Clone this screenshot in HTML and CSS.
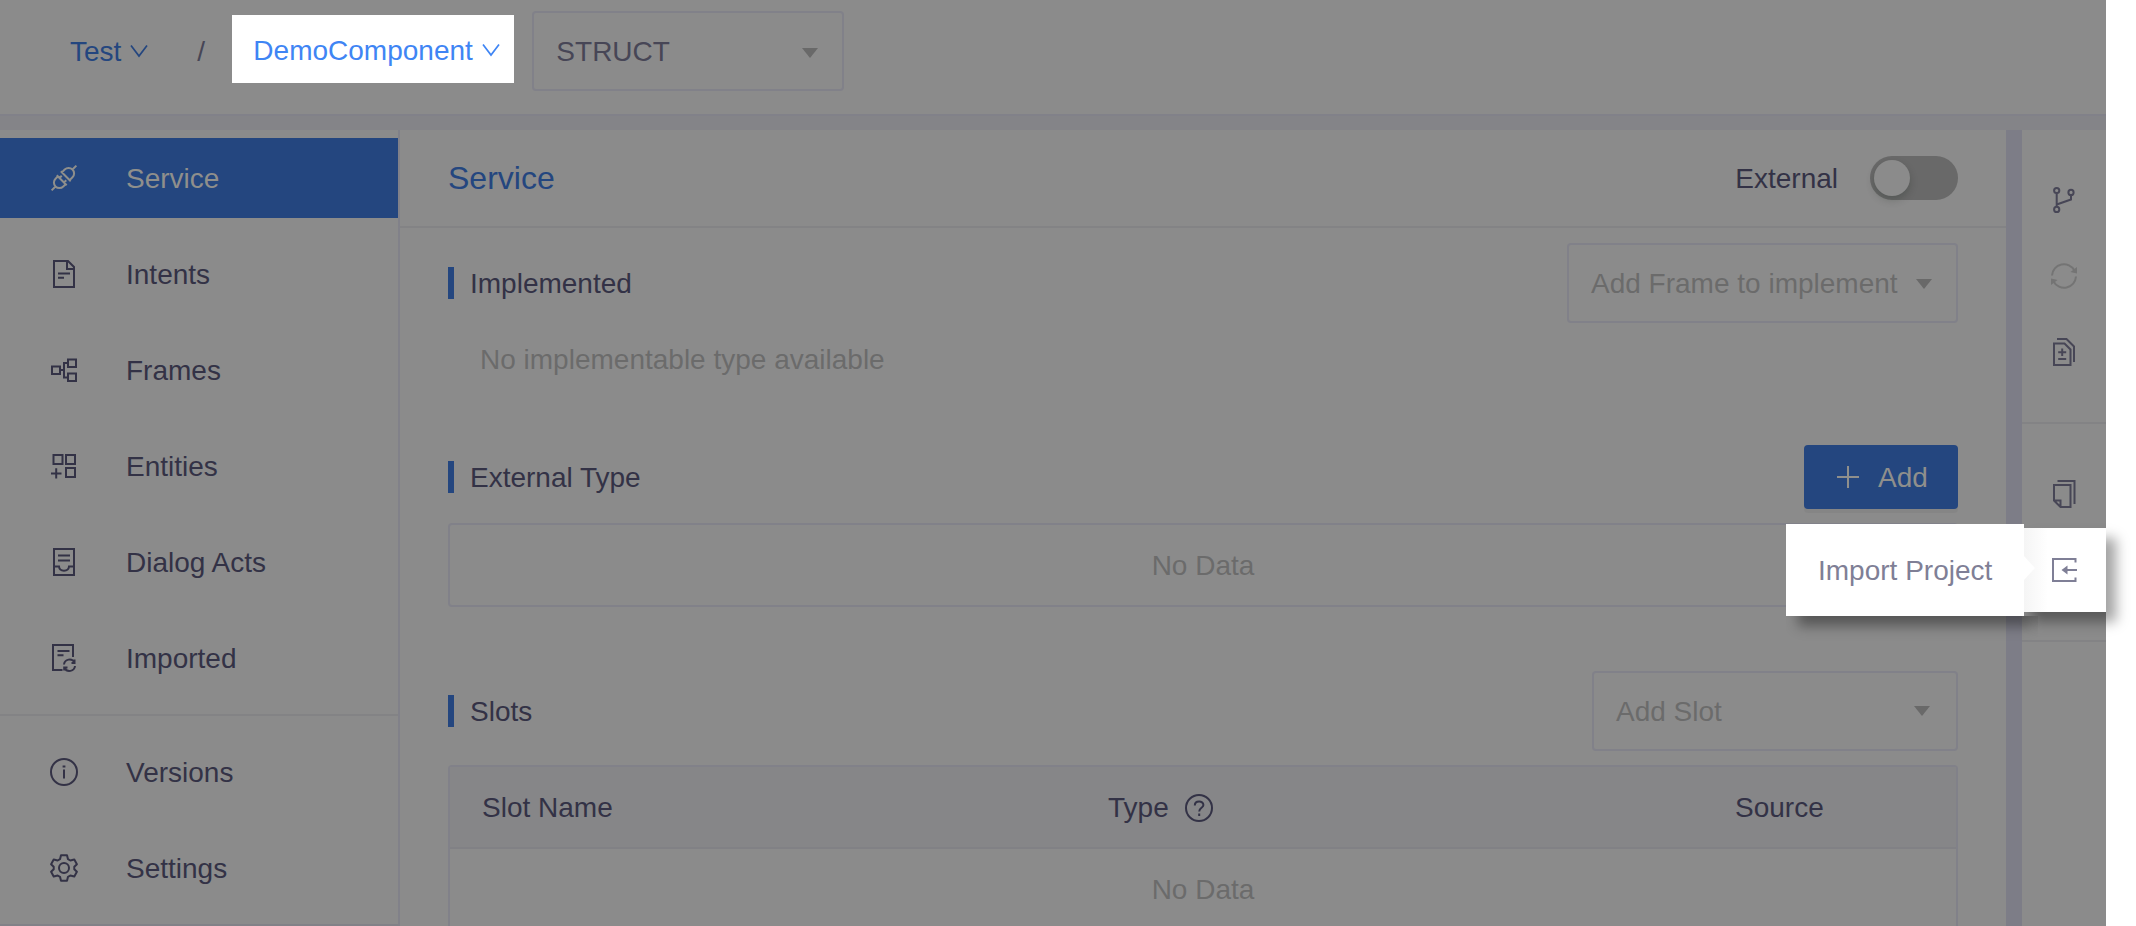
FILE: index.html
```html
<!DOCTYPE html>
<html lang="en">
<head>
<meta charset="utf-8">
<title>DemoComponent</title>
<link rel="stylesheet" href="styles.css">
</head>
<body>
<div class="app">
  <header class="topbar">
    <a class="crumb">Test<svg class="chevron" width="18" height="14" viewBox="0 0 18 14"><path d="M1 1.500 9 12 17 1.500"/></svg></a>
    <span class="slash">/</span>
    <a class="crumb crumb-active">DemoComponent<svg class="chevron" width="18" height="14" viewBox="0 0 18 14"><path d="M1 1.500 9 12 17 1.500"/></svg></a>
    <div class="select select-struct"><span>STRUCT</span><i class="caret"></i></div>
  </header>
  <div class="band"></div>
  <div class="body">
    <nav class="sidebar">
      <a class="item item-on"><svg class="icon" viewBox="0 0 32 32"><g transform="rotate(45 16 16)"><path d="M16 -1.500V4M10.500 13.500V9.500a5.500 5.500 0 0 1 11 0v4M9 13.500H23M9 19.200H23M12.800 19.200V16M19.200 19.200V16M10.500 19.200V22.500a5.500 5.500 0 0 0 11 0V19.200M16 28V33.500"/></g></svg>Service</a>
      <a class="item"><svg class="icon" viewBox="0 0 32 32"><path d="M6 3H20L26 9V29H6ZM19 3V11H26M10 15.500H22M10 19.700H16"/></svg>Intents</a>
      <a class="item"><svg class="icon" viewBox="0 0 32 32"><path d="M4 12.500H12V20H4ZM20 5.500H28V13H20ZM20 19.500H28V27H20ZM12 16H16M20 9H16V23.500H20"/></svg>Frames</a>
      <a class="item"><svg class="icon" viewBox="0 0 32 32"><path d="M5.500 5H14.500V14H5.500ZM18 5H27V14H18ZM18 18H27V27H18ZM3 23.500H13.500M8.200 18.300V28.500"/></svg>Entities</a>
      <a class="item"><svg class="icon" viewBox="0 0 32 32"><path d="M6 3H26V29H6ZM10 9.500H22M10 14.500H22M6 20.500H11C11.500 26 20.500 26 21 20.500H26"/></svg>Dialog Acts</a>
      <a class="item"><svg class="icon" viewBox="0 0 32 32"><path d="M14.500 28H5V3H25V15M9.500 9H21.500M9.500 13.300H15.500M16 22.500A5.600 5.600 0 0 1 26.500 20.500M27 24A5.600 5.600 0 0 1 16.500 26M26.500 17.500V21H23.500M16.200 28.500V25.500H19.500"/></svg>Imported</a>
      <div class="rule"></div>
      <a class="item"><svg class="icon" viewBox="0 0 32 32"><circle cx="16" cy="16" r="13"/><path d="M16 13.500V22.500M14.600 10.500H17.400"/></svg>Versions</a>
      <a class="item"><svg class="icon" viewBox="0 0 32 32"><circle cx="16" cy="16" r="5"/><path d="M13 3.200H19L20 7.200L22.300 8.500L26.300 7.500L28.900 12.200L26.300 14.800V17.200L28.900 19.800L26.300 24.500L22.300 23.500L20 24.800L19 28.800H13L12 24.800L9.700 23.500L5.700 24.500L3.100 19.800L5.700 17.200V14.800L3.100 12.200L5.700 7.500L9.700 8.500L12 7.200Z" stroke-linejoin="round"/></svg>Settings</a>
    </nav>
    <main class="main">
      <div class="title-row"><h1>Service</h1><div class="external"><span class="label">External</span><span class="switch"></span></div></div>
      <div class="content">
        <section class="section">
          <div class="head"><h2>Implemented</h2><div class="select select-frame muted"><span>Add Frame to implement</span><i class="caret"></i></div></div>
          <p class="note">No implementable type available</p>
        </section>
        <section class="section">
          <div class="head"><h2>External Type</h2><button class="add"><svg width="24" height="24" viewBox="0 0 24 24"><path d="M12 1V23M1 12H23"/></svg><span class="label">Add</span></button></div>
          <div class="table"><div class="empty">No Data</div></div>
        </section>
        <section class="section">
          <div class="head"><h2>Slots</h2><div class="select select-slot muted"><span>Add Slot</span><i class="caret"></i></div></div>
          <div class="table">
            <div class="thead"><span>Slot Name</span><span class="type">Type<svg width="28" height="28" viewBox="0 0 28 28"><circle cx="14" cy="14" r="13"/><path d="M9.800 11.500C9.800 6.300 18.400 6.300 18.400 11.100C18.400 14 14.200 13.700 14.200 17.500M14.200 19.600V22"/></svg></span><span>Source</span></div>
            <div class="empty">No Data</div>
          </div>
        </section>
      </div>
    </main>
    <div class="gutter"></div>
    <aside class="rail">
      <div class="tools tools-top">
        <div class="tool"><svg class="icon" viewBox="0 0 32 32"><circle cx="8.700" cy="6.500" r="2.600"/><circle cx="23" cy="8.400" r="2.600"/><circle cx="8.700" cy="25.400" r="2.600"/><path d="M8.700 9V23M23 11V15.500L8.700 20.500"/></svg></div>
        <div class="tool off"><svg class="icon" viewBox="0 0 32 32"><path d="M4 15.500A12 12 0 0 1 26.500 10.500M28 16.500A12 12 0 0 1 5.500 21.500"/><path class="solid" d="M29 7V13.500L22.500 12ZM3 25V18.500L9.500 20Z"/></svg></div>
        <div class="tool"><svg class="icon" viewBox="0 0 32 32"><path d="M6 7.500H16.500L22.500 13.500V29H6ZM9 3H18.500L26 10.500V26M14.200 12.500V20M10.200 16.300H18.200M10.200 23H18.200"/></svg></div>
      </div>
      <div class="tools tools-mid">
        <div class="tool tool-tall"><svg class="icon" viewBox="0 0 32 32"><path d="M6 7H22.500V29H12.500L6 22.500ZM9.500 3H26.500V26M6 22.500H12.500V29"/></svg></div>
        <div class="tool tool-lit"><svg class="icon" viewBox="0 0 32 32"><path d="M27.500 8.500V5H5V27H27.500V23.500M17 16H29"/><path class="solid" d="M19.500 11.500V20.500L13.500 16Z"/></svg>
          <div class="tip">Import Project</div>
        </div>
      </div>
    </aside>
  </div>
</div>
</body>
</html>
```

FILE: styles.css
```css
* { box-sizing: border-box; }
body { margin: 0; background: #fff; font: 28px/40px "Liberation Sans", Arial, sans-serif; color: #333246; overflow: hidden; }
svg { fill: none; stroke: currentColor; stroke-width: 2; flex: none; display: block; }
h1, h2, p { margin: 0; font-weight: 400; }
.app { width: 2106px; height: 926px; display: flex; flex-direction: column; background: #8b8b8b; }

.topbar { height: 114px; flex: none; display: flex; align-items: flex-start; padding: 11px 0 0 70px; }
.crumb { display: flex; align-items: center; color: #24467f; height: 80px; padding-top: 2px; }
.crumb .chevron { margin: -2px 0 0 9px; stroke-width: 1.7; }
.slash { width: 35px; line-height: 82px; color: #474656; margin-left: 49px; }
.crumb-active { width: 282px; height: 68px; margin-top: 4px; padding: 4px 0 0 21px; background: #fff; color: #3f85f4; }
.select { height: 80px; border: 2px solid #818189; border-radius: 4px; display: flex; align-items: center; justify-content: space-between; padding: 0 24px; color: #474656; }
.select span, .label { padding-top: 2px; }
.select-struct { width: 312px; margin-left: 18px; padding-left: 22px; }
.select-frame { width: 391px; padding-right: 24px; padding-left: 22px; }
.select-slot { width: 366px; padding-left: 22px; padding-right: 26px; }
.muted { color: #6b6b6b; }
.caret { border: solid transparent; border-width: 10px 8.5px 0; border-top-color: #696969; margin-top: 2px; }
.select-struct .caret { margin-top: 4px; }
.select-slot .caret { margin-top: 0; }
.band { height: 16px; flex: none; background: #848488; border-top: 2px solid #818189; }

.body { flex: 1; min-height: 0; display: flex; }
.sidebar { width: 400px; border-right: 2px solid #818189; border-bottom: 2px solid #818187; padding-top: 8px; display: flex; flex-direction: column; gap: 16px; }
.item { height: 80px; flex: none; display: flex; align-items: center; padding: 2px 0 0 48px; gap: 46px; }
.icon { width: 32px; height: 32px; }
.item .icon { margin-top: -2px; }
.item-on { background: #24467f; color: #8f8f8c; }
.rule { height: 2px; flex: none; background: #838385; }

.main { width: 1606px; overflow: hidden; }
.title-row { height: 98px; border-bottom: 2px solid #838385; display: flex; align-items: center; justify-content: space-between; padding: 0 48px; }
h1 { font-size: 32px; color: #24467f; }
.external { display: flex; align-items: center; gap: 32px; }
.switch { width: 88px; height: 44px; border-radius: 22px; background: #696969; padding: 4px; }
.switch::before { content: ""; display: block; width: 36px; height: 36px; border-radius: 50%; background: #8b8b8b; box-shadow: 0 4px 8px rgba(0, 20, 10, .2); }
.content { padding: 15px 48px 0; display: flex; flex-direction: column; gap: 64px; }
.section { display: flex; flex-direction: column; gap: 14px; }
.head { display: flex; align-items: center; justify-content: space-between; }
h2 { font-size: 28px; height: 32px; line-height: 34px; border-left: 6px solid #24467f; padding-left: 16px; }
.note { padding-left: 32px; height: 44px; line-height: 46px; color: #6b6b6b; }
.add { width: 154px; height: 64px; border: 0; border-radius: 4px; background: #24467f; color: #8f8f8c; font: inherit; padding: 0 0 0 32px; display: flex; align-items: center; gap: 18px; box-shadow: 0 4px 0 rgba(0, 0, 0, .04); }
.table { border: 2px solid #818189; border-radius: 4px; }
.empty { height: 80px; line-height: 82px; text-align: center; color: #6b6b6b; }
.thead { display: grid; grid-template-columns: 627px 627px 1fr; height: 82px; line-height: 82px; background: #868688; border-bottom: 2px solid #818185; }
.thead span { padding-left: 31px; }
.thead span:first-child { padding-left: 32px; }
.type { display: flex; align-items: center; gap: 16px; }

.gutter { width: 16px; background: #7d7d87; }
.rail { width: 84px; color: #474656; }
.tools { display: flex; flex-direction: column; align-items: center; border-bottom: 2px solid #838385; }
.tools-top { height: 294px; padding-top: 32px; }
.tools-mid { height: 218px; padding-top: 32px; }
.tool { width: 84px; height: 76px; display: flex; align-items: center; justify-content: center; flex: none; }
.tool-tall { height: 72px; padding-top: 4px; }
.off { color: #747474; }
.tool-lit { position: relative; height: 84px; background: #fff; color: #7f7f96; box-shadow: 10px 10px 12px rgba(0, 0, 0, .36); }
.solid { fill: currentColor; stroke: none; }
.tip { position: absolute; right: 82px; top: -4px; width: 238px; height: 92px; line-height: 94px; padding-left: 32px; white-space: nowrap; background: #fff; box-shadow: 10px 12px 12px -2px rgba(0, 0, 0, .38); clip-path: polygon(0 0, 100% 0, 100% 92px, 252px 92px, 252px 120px, 0 120px); }
.tool-lit::after { content: ""; position: absolute; left: 0; top: 0; width: 26px; height: 84px; background: linear-gradient(90deg, #f4f4f4, #fff); clip-path: polygon(2px 0, 100% 0, 100% 100%, 2px 100%, 2px 52px, 13px 40px, 2px 28px); }
```
